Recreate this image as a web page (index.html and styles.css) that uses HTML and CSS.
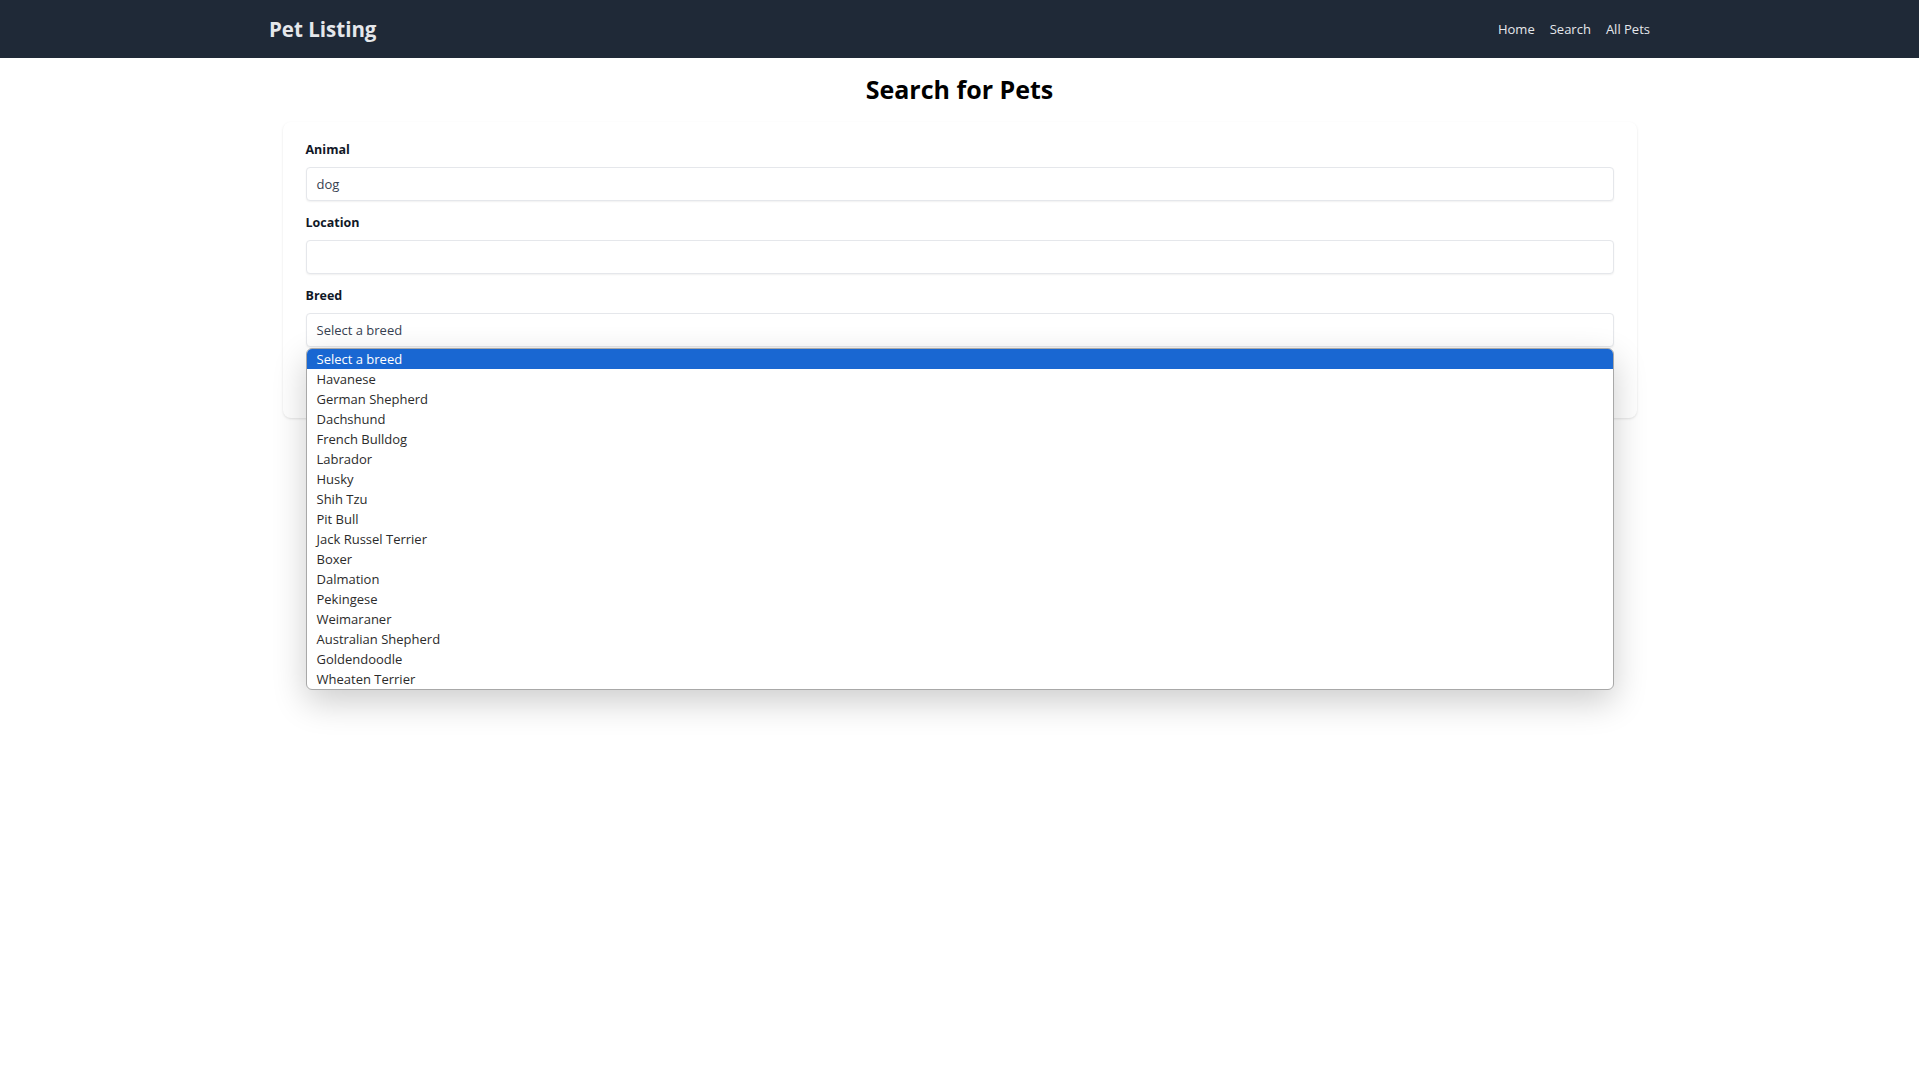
FILE: index.html
```html
<!DOCTYPE html>
<html lang="en">
<head>
<meta charset="utf-8">
<title>Pet Listing</title>
<link rel="stylesheet" href="styles.css">
</head>
<body>
<header class="navbar">
  <div class="nav-inner">
    <a class="brand" href="#">Pet Listing</a>
    <nav class="nav-links">
      <a href="#">Home</a>
      <a href="#">Search</a>
      <a href="#">All Pets</a>
    </nav>
  </div>
</header>
<main class="page">
  <h1 class="title">Search for Pets</h1>
  <form class="card">
    <div class="field">
      <label class="label">Animal</label>
      <div class="input">dog</div>
    </div>
    <div class="field">
      <label class="label">Location</label>
      <div class="input"></div>
    </div>
    <div class="field">
      <label class="label">Breed</label>
      <div class="select-wrap">
        <div class="input">Select a breed</div>
        <div class="dropdown">
          <div class="option selected">Select a breed</div>
          <div class="option">Havanese</div>
          <div class="option">German Shepherd</div>
          <div class="option">Dachshund</div>
          <div class="option">French Bulldog</div>
          <div class="option">Labrador</div>
          <div class="option">Husky</div>
          <div class="option">Shih Tzu</div>
          <div class="option">Pit Bull</div>
          <div class="option">Jack Russel Terrier</div>
          <div class="option">Boxer</div>
          <div class="option">Dalmation</div>
          <div class="option">Pekingese</div>
          <div class="option">Weimaraner</div>
          <div class="option">Australian Shepherd</div>
          <div class="option">Goldendoodle</div>
          <div class="option">Wheaten Terrier</div>
        </div>
      </div>
    </div>
    <div class="actions">
      <span class="submit" aria-label="Search"></span>
    </div>
  </form>
</main>
</body>
</html>
```
FILE: styles.css
```css
* { box-sizing: border-box; }
html, body { margin: 0; padding: 0; background: #ffffff; overflow: visible; }
body { font-family: "Open Sans", "Noto Sans", sans-serif; color: #111827; min-height: 1079px; }

.navbar { background: #1f2937; height: 58px; }
.nav-inner {
  width: 1381px; margin: 0 auto; height: 58px;
  display: flex; align-items: center; justify-content: space-between;
}
.brand { color: #e5e7eb; font-weight: 700; font-size: 20.5px; line-height: 28px; text-decoration: none; margin-top: -1px; }
.nav-links { display: flex; gap: 15px; }
.nav-links a { color: #e5e7eb; font-size: 13px; line-height: 20px; text-decoration: none; }

.page { display: flex; flex-direction: column; align-items: center; overflow: visible; }
.title { margin: 14px 0 0; font-size: 25px; line-height: 34px; font-weight: 700; color: #000; }

.card {
  position: relative;
  width: 1354px; margin-top: 16px;
  padding: 18px 23px 21px;
  background: #fff; border-radius: 8px;
  box-shadow: 0 1px 3px rgba(0,0,0,0.08), 0 1px 2px rgba(0,0,0,0.04);
  display: flex; flex-direction: column;
  overflow: visible;
}
.field { display: flex; flex-direction: column; margin-bottom: 12px; overflow: visible; }
.label { font-size: 12.5px; line-height: 20px; font-weight: 700; color: #111827; margin-bottom: 7px; }
.input {
  height: 34px; border: 1px solid #e5e7eb; border-radius: 4px;
  padding: 0 10px; font-size: 13px; line-height: 32px; color: #374151;
  box-shadow: 0 1px 2px rgba(0,0,0,0.06); background: #fff;
}
.select-wrap { position: relative; overflow: visible; }
.dropdown {
  position: absolute; left: 0; right: 0; top: 35px;
  height: 342px;
  background: #fff; border: 1px solid #a8a8a8; border-radius: 6px;
  box-shadow: 0 12px 34px rgba(0,0,0,0.2);
  z-index: 10;
}
.option { height: 20px; line-height: 20px; padding-left: 10px; font-size: 13px; color: #2b2b2b; }
.option.selected { background: #1967d2; color: #fff; border-radius: 5px 5px 0 0; }

.actions { display: flex; margin-top: 10px; }
.submit {
  display: block; height: 28px; width: 90px; border-radius: 4px;
  background: #1f2937;
}
```
